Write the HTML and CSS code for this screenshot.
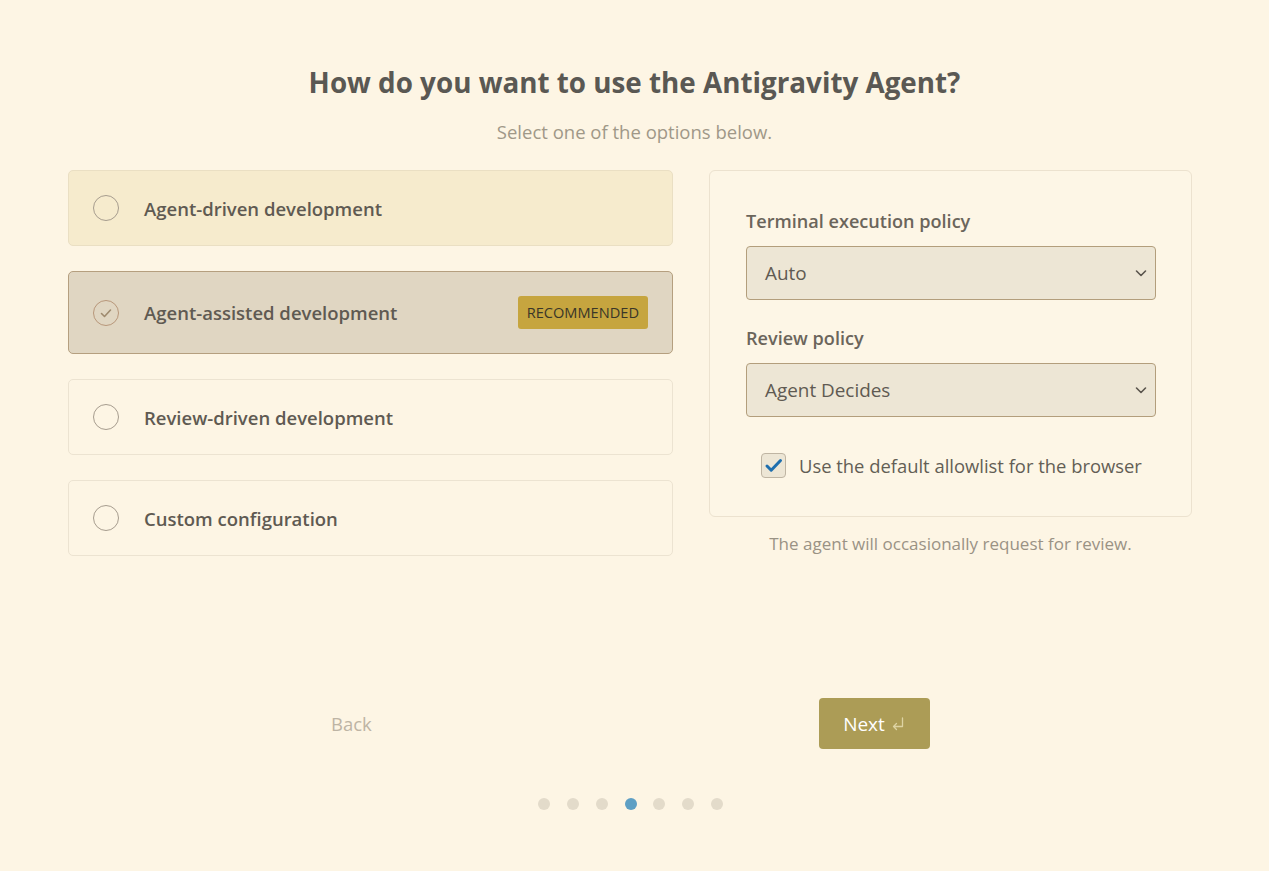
FILE: index.html
```html
<!DOCTYPE html>
<html lang="en">
<head>
<meta charset="utf-8">
<title>Antigravity Agent</title>
<link rel="stylesheet" href="styles.css">
</head>
<body>
<main class="page">
  <h1 class="title">How do you want to use the Antigravity Agent?</h1>
  <p class="subtitle">Select one of the options below.</p>

  <div class="content">
    <div class="options">
      <div class="option option-hover">
        <span class="radio"></span>
        <span class="option-label">Agent-driven development</span>
      </div>
      <div class="option option-selected">
        <span class="radio radio-checked">
          <svg viewBox="0 0 26 26" width="26" height="26"><path d="M8.5 13.5l3 3 6-6.5" fill="none" stroke="#9e8a6e" stroke-width="1.6" stroke-linecap="round" stroke-linejoin="round"/></svg>
        </span>
        <span class="option-label">Agent-assisted development</span>
        <span class="badge">RECOMMENDED</span>
      </div>
      <div class="option">
        <span class="radio"></span>
        <span class="option-label">Review-driven development</span>
      </div>
      <div class="option">
        <span class="radio"></span>
        <span class="option-label">Custom configuration</span>
      </div>
    </div>

    <div class="side">
      <div class="panel">
        <div class="field">
          <div class="field-label">Terminal execution policy</div>
          <div class="select">
            <span>Auto</span>
            <svg class="chev" viewBox="0 0 16 16" width="16" height="16"><path d="M3.5 6l4.5 4.5L12.5 6" fill="none" stroke="#5a554d" stroke-width="1.6" stroke-linecap="round" stroke-linejoin="round"/></svg>
          </div>
        </div>
        <div class="field">
          <div class="field-label">Review policy</div>
          <div class="select">
            <span>Agent Decides</span>
            <svg class="chev" viewBox="0 0 16 16" width="16" height="16"><path d="M3.5 6l4.5 4.5L12.5 6" fill="none" stroke="#5a554d" stroke-width="1.6" stroke-linecap="round" stroke-linejoin="round"/></svg>
          </div>
        </div>
        <label class="check-row">
          <span class="checkbox">
            <svg viewBox="0 0 25 25" width="25" height="25"><path d="M6 13l4.2 4.2L19.5 7.5" fill="none" stroke="#1e6fae" stroke-width="3" stroke-linecap="round" stroke-linejoin="round"/></svg>
          </span>
          <span class="check-label">Use the default allowlist for the browser</span>
        </label>
      </div>
      <p class="note">The agent will occasionally request for review.</p>
    </div>
  </div>

  <div class="nav">
    <button class="btn-back">Back</button>
    <button class="btn-next">Next
      <svg viewBox="0 0 16 16" width="16" height="16"><path d="M12.5 2v8.5H3.5M6.5 7.5l-3 3 3 3" fill="none" stroke="#ddd3a3" stroke-width="1.3" stroke-linecap="round" stroke-linejoin="round"/></svg>
    </button>
  </div>

  <div class="dots">
    <span class="dot"></span>
    <span class="dot"></span>
    <span class="dot"></span>
    <span class="dot dot-active"></span>
    <span class="dot"></span>
    <span class="dot"></span>
    <span class="dot"></span>
  </div>
</main>
</body>
</html>
```

FILE: styles.css
```css
* { box-sizing: border-box; }

html, body {
  margin: 0;
  padding: 0;
  background: #fdf5e4;
  font-family: "Open Sans", "Noto Sans", sans-serif;
  color: #5b5750;
}

.page {
  padding-top: 61px;
  width: 1269px;
  min-height: 871px;
}

.title {
  margin: 0;
  text-align: center;
  font-size: 27.8px;
  line-height: 42px;
  font-weight: 700;
  color: #5a5853;
}

.subtitle {
  margin: 16px 0 0;
  text-align: center;
  font-size: 18.5px;
  line-height: 26px;
  color: #a09888;
}

.content {
  display: flex;
  gap: 36px;
  margin: 25px 0 0 68px;
  width: 1124px;
  align-items: flex-start;
}

.options {
  width: 605px;
  display: flex;
  flex-direction: column;
  gap: 25px;
}

.option {
  display: flex;
  align-items: center;
  padding: 24px 24px;
  border: 1px solid #ece3d1;
  border-radius: 5px;
  background: #fdf5e4;
  min-height: 76px;
}

.option-hover {
  background: #f6ebcd;
  border-color: #eadfc3;
}

.option-selected {
  background: #e0d6c2;
  border-color: #b59f7f;
}

.radio {
  width: 26px;
  height: 26px;
  border-radius: 50%;
  border: 1px solid #a69c8e;
  flex-shrink: 0;
  display: flex;
  align-items: center;
  justify-content: center;
}

.radio svg { display: block; margin: -1px; }

.radio-checked {
  border: 1.5px solid #b8977a;
}

.option-label {
  margin-left: 25px;
  font-size: 18.5px;
  font-weight: 600;
  color: #5f5a52;
  flex: 1;
}

.badge {
  background: #c6a53f;
  color: #3a3628;
  font-size: 14.6px;
  font-weight: 500;
  line-height: 33px;
  height: 33px;
  padding: 0 9px;
  border-radius: 3px;
}

.side {
  width: 483px;
}

.panel {
  border: 1px solid #ece2cf;
  border-radius: 6px;
  background: #fdf6e6;
  padding: 38px 36px 36px 36px;
  height: 347px;
}

.field { margin-bottom: 26px; }

.field-label {
  font-size: 18.1px;
  font-weight: 600;
  color: #6b655b;
  line-height: 24px;
  margin-bottom: 13px;
}

.select {
  width: 410px;
  height: 54px;
  background: #ede6d5;
  border: 1px solid #b39e7c;
  border-radius: 4px;
  display: flex;
  align-items: center;
  justify-content: space-between;
  padding: 0 6px 0 18px;
  font-size: 18.9px;
  color: #5f5a52;
}

.chev { display: block; }

.check-row {
  display: flex;
  align-items: center;
  margin-left: 15px;
  margin-top: 36px;
}

.checkbox {
  width: 25px;
  height: 25px;
  border: 1px solid #bfb5a3;
  border-radius: 4px;
  background: #ede6d5;
  display: flex;
  align-items: center;
  justify-content: center;
  flex-shrink: 0;
}

.checkbox svg { display: block; margin: -1px; }

.check-label {
  margin-left: 13px;
  font-size: 18.4px;
  color: #635e55;
}

.note {
  margin: 16px 0 0;
  text-align: center;
  font-size: 17px;
  line-height: 22px;
  color: #9a9284;
}

.nav {
  display: flex;
  justify-content: space-between;
  align-items: center;
  width: 611px;
  margin: 142px 0 0 319px;
}

.btn-back {
  background: none;
  border: none;
  font-family: inherit;
  font-size: 18.5px;
  color: #bdb4a4;
  padding: 0 12px;
  cursor: pointer;
}

.btn-next {
  background: #ac9c56;
  border: none;
  border-radius: 4px;
  width: 111px;
  height: 51px;
  font-family: inherit;
  font-size: 19px;
  color: #ffffff;
  display: flex;
  align-items: center;
  justify-content: center;
  gap: 5px;
  cursor: pointer;
}

.btn-next svg { display: block; }

.dots {
  display: flex;
  justify-content: center;
  gap: 16.8px;
  margin: 49px 0 0 -8px;
}

.dot {
  width: 12px;
  height: 12px;
  border-radius: 50%;
  background: #e3dbca;
}

.dot-active { background: #5e9fc4; }
```
